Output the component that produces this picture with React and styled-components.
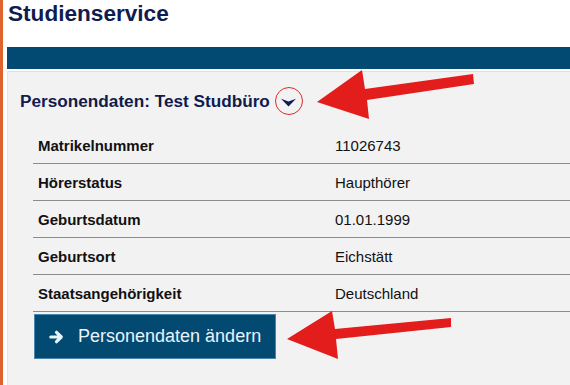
import styled, { createGlobalStyle } from "styled-components"

const GlobalStyle = createGlobalStyle`
  html, body {
    margin: 0;
    padding: 0;
    background: #ffffff;
    font-family: "Liberation Sans", Arial, sans-serif;
  }
`;

const Page = styled.div`
  position: relative;
  min-height: 100vh;
  border-left: 3px solid #e0622c;
  padding-left: 4px;
  box-sizing: border-box;
  overflow: hidden;
`;

const Title = styled.h1`
  margin: 0 0 19px 1px;
  font-size: 22.6px;
  line-height: 28px;
  font-weight: bold;
  color: #0f1c4d;
`;

const Bar = styled.div`
  height: 22px;
  background: #034a73;
`;

const Panel = styled.section`
  margin-top: 2px;
  border-top: 1px solid #d3e2ec;
  border-left: 1px solid #e6e6e6;
  background: #f3f2f3;
  min-height: 320px;
`;

const Heading = styled.div`
  display: flex;
  align-items: center;
  height: 55px;
  padding: 3px 0 0 12px;
  box-sizing: border-box;
`;

const HeadingText = styled.h2`
  margin: 0;
  font-size: 17.2px;
  font-weight: bold;
  color: #0f1c4d;
`;

const Toggle = styled.button`
  display: flex;
  align-items: center;
  justify-content: center;
  width: 28px;
  height: 28px;
  margin: 0 0 0 5px;
  padding: 2px 0 0 0;
  border: 1.5px solid #d92a2a;
  border-radius: 50%;
  background: transparent;
  box-sizing: border-box;
`;

const Table = styled.div`
  margin-left: 25px;
`;

const Row = styled.div`
  display: grid;
  grid-template-columns: 297px 1fr;
  align-items: center;
  height: 37px;
  border-bottom: 1px solid #8c8c8c;
  box-sizing: border-box;
  font-size: 15px;
  color: #111111;
`;

const Label = styled.div`
  padding-left: 5px;
  font-weight: bold;
`;

const Value = styled.div`
  padding-left: 5px;
`;

const EditButton = styled.button`
  display: flex;
  align-items: center;
  gap: 14px;
  width: 242px;
  height: 45px;
  margin: 2px 0 0 1px;
  padding: 0 0 0 14px;
  border: 1px solid #4a86ab;
  background: #034a73;
  color: #e8f4fb;
  font-family: "Liberation Sans", Arial, sans-serif;
  font-size: 18px;
  box-sizing: border-box;
`;

const Overlay = styled.svg`
  position: absolute;
  top: 0;
  left: 0;
  pointer-events: none;
`;

const rows = [
  ["Matrikelnummer", "11026743"],
  ["Hörerstatus", "Haupthörer"],
  ["Geburtsdatum", "01.01.1999"],
  ["Geburtsort", "Eichstätt"],
  ["Staatsangehörigkeit", "Deutschland"],
];

const App = () => {
  return (
    <>
      <GlobalStyle />
      <Page>
        <Title>Studienservice</Title>
        <Bar />
        <Panel>
          <Heading>
            <HeadingText>Personendaten: Test Studbüro</HeadingText>
            <Toggle aria-label="aufklappen">
              <svg width="15" height="9" viewBox="0 0 15 9">
                <path d="M0 0.8 L7.5 3.6 L15 0.8 L7.5 8.5 Z" fill="#0f1c4d" />
              </svg>
            </Toggle>
          </Heading>
          <Table>
            {rows.map(([label, value]) => (
              <Row key={label}>
                <Label>{label}</Label>
                <Value>{value}</Value>
              </Row>
            ))}
            <EditButton>
              <svg width="15" height="14" viewBox="0 0 15 14">
                <path
                  d="M1.8 7 H12 M7.5 2.3 L12.3 7 L7.5 11.7"
                  fill="none"
                  stroke="#e8f4fb"
                  strokeWidth="3.2"
                  strokeLinecap="round"
                  strokeLinejoin="round"
                />
              </svg>
              Personendaten ändern
            </EditButton>
          </Table>
        </Panel>
        <Overlay width="570" height="385" viewBox="0 0 570 385">
          <polygon
            points="314,102 359,70 362,89 470,74 471,84 364,100 366,119"
            fill="#e31c1c"
          />
          <polygon
            points="284,339 329,311 332,329 448,318 448,327 333,339 335,359"
            fill="#e31c1c"
          />
        </Overlay>
      </Page>
    </>
  )
}

export default App
